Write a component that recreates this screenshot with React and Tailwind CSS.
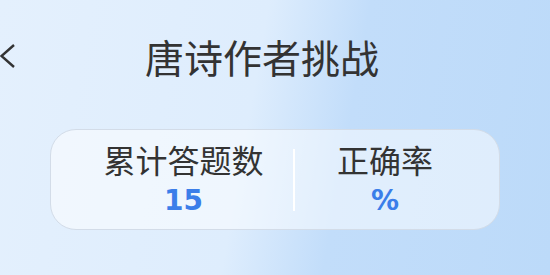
export default function App() {
  return (
    <div className="w-[550px] h-[275px] overflow-hidden bg-[linear-gradient(100deg,#e4f0fd_0%,#deedfd_45%,#c2ddfa_62%,#bcdaf9_100%)] font-['Noto_Sans_CJK_SC',sans-serif]">
      {/* 顶部标题栏 */}
      <div className="relative h-[112px] flex items-center justify-center pr-[26px]">
        <svg className="absolute left-0 top-[43px]" width="16" height="26" viewBox="0 0 16 26">
          <path d="M14 2 L1.5 13 L14 24" fill="none" stroke="#333" strokeWidth="2.4" />
        </svg>
        <h1 className="text-[39px] text-[#333]">唐诗作者挑战</h1>
      </div>

      {/* 统计卡片 */}
      <div className="mx-[50px] mt-[17px] h-[101px] rounded-[26px] border border-[#d3dce8] bg-white/50 flex items-center pl-[23px]">
        <div className="w-[219px] flex flex-col items-center">
          <div className="text-[32px] leading-[40px] text-[#333]">累计答题数</div>
          <div className="mt-[3px] text-[28px] leading-[38px] font-bold text-[#3b7ee9] font-['DejaVu_Sans',sans-serif]">15</div>
        </div>
        <div className="w-[2px] h-[62px] bg-white" />
        <div className="w-[180px] flex flex-col items-center">
          <div className="text-[32px] leading-[40px] text-[#333]">正确率</div>
          <div className="mt-[3px] text-[28px] leading-[38px] font-bold text-[#3b7ee9] font-['DejaVu_Sans',sans-serif]">%</div>
        </div>
      </div>
    </div>
  );
}
